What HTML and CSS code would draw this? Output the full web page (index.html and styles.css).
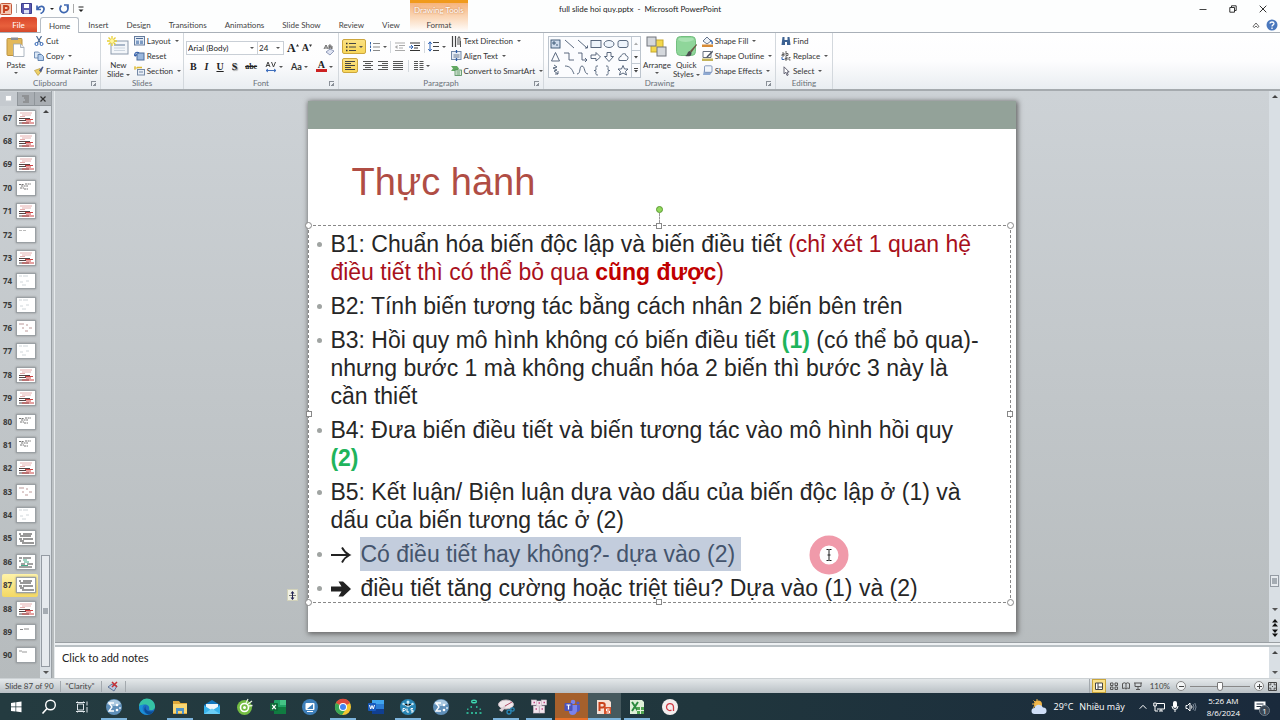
FILE: index.html
```html
<!DOCTYPE html>
<html lang="vi">
<head>
<meta charset="utf-8">
<title>full slide hoi quy.pptx - Microsoft PowerPoint</title>
<link rel="stylesheet" href="styles.css">
</head>
<body>
<svg class="defs" aria-hidden="true">
  <symbol id="spss" viewBox="0 0 18 18"><circle cx="9" cy="9" r="8" fill="#5f8fb8"/><path d="M2 6a8 8 0 0 1 14 0Q9 10 2 6z" fill="#a9c8e0"/><path d="M9 5H4l3 4-3 4h5" fill="none" stroke="#fff" stroke-width="1.3"/><circle cx="12" cy="7" r="1.3" fill="#fff"/><circle cx="12" cy="12" r="1.3" fill="#fff"/><circle cx="15" cy="10" r="1" fill="#dcebf6"/></symbol>
  <symbol id="t-red" viewBox="0 0 18 14"><path d="M3 2h12M5 4h9M3 5.500h5" stroke="#d99" stroke-width=".8"/><path d="M2 7.500h11M2 9.500h7M2 12h10" stroke="#544" stroke-width="1"/><path d="M8 8.500h8M9 10h5M5 12h12" stroke="#c44" stroke-width="1.200"/></symbol>
  <symbol id="t-text" viewBox="0 0 18 14"><path d="M2 3.500h5M8 3h6M4 5h7M3 7h4M7 8h4" stroke="#666" stroke-width=".9" stroke-dasharray="2 .6"/></symbol>
  <symbol id="t-faint" viewBox="0 0 18 14"><path d="M2 2h3M6 2h5M3 8h3M9 7h3M5 11h4" stroke="#c3cbd0" stroke-width=".8"/></symbol>
  <symbol id="t-map" viewBox="0 0 18 14"><path d="M2 3h5M5 7h2M9 4h2M12 7h3M8 10h3" stroke="#b99" stroke-width="1"/></symbol>
  <symbol id="t-dense" viewBox="0 0 18 14"><path d="M2 3h2M6 3h9M3 5h11M2 8h3M6 8h10M3 10h4M5 12h12" stroke="#333" stroke-width="1.100"/></symbol>
  <symbol id="t-green" viewBox="0 0 18 14"><path d="M2 3h3M6 3h8M2 6h2M4 9h4M10 9h6M2 12h13" stroke="#444" stroke-width="1"/><path d="M6 5h4M7 7h5M4 10.500h7" stroke="#4a8" stroke-width="1.100"/></symbol>
</svg>

<header class="titlebar">
  <div class="quick">
    <button class="ib" aria-label="PowerPoint"><svg width="12" height="12" viewBox="0 0 12 12"><rect x=".5" y=".5" width="11" height="11" rx="1" fill="#f4c8b4" stroke="#c4593a"/><path d="M4 10V3h2.500a2 2 0 0 1 0 4H4" fill="none" stroke="#c43e1c" stroke-width="1.800"/></svg></button>
    <i class="bar"></i>
    <button class="ib" aria-label="Save"><svg width="11" height="11" viewBox="0 0 11 11"><path d="M.5.5h10v10h-9l-1-1z" fill="#5a5bb0" stroke="#3b3d8c"/><path d="M3 1h5v4H3z" fill="#fff"/><path d="M3 7h5v3.500H3z" fill="#dfe3f5"/></svg></button>
    <button class="ib" aria-label="Undo"><svg width="10" height="10" viewBox="0 0 10 10"><path d="M1 1.500V5.500H5M1.500 5C4 1 8.500 2 8 5.500 7.800 7.500 6 9 4.500 9.500" fill="none" stroke="#3d66b0" stroke-width="1.700"/></svg></button>
    <i class="caret"></i>
    <button class="ib" aria-label="Repeat"><svg width="10" height="10" viewBox="0 0 10 10"><path d="M2.500 1.500a4 4 0 1 0 5.500.5M5 1h4v4" fill="none" stroke="#3d66b0" stroke-width="1.700"/></svg></button>
    <i class="bar"></i>
    <button class="ib" aria-label="Customize"><svg width="6" height="8" viewBox="0 0 6 8"><path d="M.5 2h5" stroke="#222"/><path d="M.5 4.500h5L3 7z" fill="#222"/></svg></button>
  </div>
  <h1 class="doc">full slide hoi quy.pptx &nbsp;-&nbsp; Microsoft PowerPoint</h1>
  <div class="win">
    <button aria-label="Minimize"><svg width="8" height="8" viewBox="0 0 8 8"><path d="M.5 4.500h7" stroke="#444"/></svg></button>
    <button aria-label="Restore"><svg width="8" height="8" viewBox="0 0 8 8"><path d="M.8 2.500h4.700v4.700H.8zM2.500 2.500V.8h4.700v4.700H5.500" fill="none" stroke="#333"/></svg></button>
    <button aria-label="Close"><svg width="8" height="8" viewBox="0 0 8 8"><path d="M.7.7l6.600 6.600M7.300.7L.7 7.300" stroke="#333"/></svg></button>
  </div>
</header>

<nav class="tabs">
  <button class="tab file">File</button>
  <button class="tab on">Home</button>
  <button class="tab">Insert</button>
  <button class="tab">Design</button>
  <button class="tab">Transitions</button>
  <button class="tab">Animations</button>
  <button class="tab">Slide Show</button>
  <button class="tab">Review</button>
  <button class="tab">View</button>
  <div class="context"><span>Drawing Tools</span><button class="tab fmt">Format</button></div>
  <div class="help">
    <button class="ib" aria-label="Minimize the Ribbon"><svg width="8" height="8" viewBox="0 0 8 8"><path d="M1 5.500L4 2l3 3.500L5.500 6.500 4 5 2.500 6.500z" fill="none" stroke="#444" stroke-width=".8"/></svg></button>
    <button class="ib" aria-label="Help"><svg width="12" height="12" viewBox="0 0 12 12"><circle cx="6" cy="6" r="5.500" fill="#4a78bd"/><path d="M4 4.500C4 2.500 8 2.500 8 4.500 8 6 6 5.800 6 7.500M6 8.500V10" fill="none" stroke="#fff" stroke-width="1.300"/></svg></button>
  </div>
</nav>

<section class="ribbon">
  <div class="group g-clip">
    <div class="body">
      <button class="big"><svg width="20" height="21" viewBox="0 0 20 21"><rect x="1" y="2.500" width="15" height="17" rx="1" fill="#e3b95b" stroke="#bd9340"/><path d="M5 4V1.500h7V4z" fill="#8a8f96"/><path d="M7.500 8h7l3.500 3.500v9H7.500z" fill="#fff" stroke="#9aa6b4" stroke-width=".8"/><path d="M14.500 8v3.500H18" fill="#e6ebf0" stroke="#9aa6b4" stroke-width=".8"/></svg><span>Paste</span><i class="caret"></i></button>
      <div class="stack">
        <button class="sm"><svg width="10" height="10" viewBox="0 0 10 10"><path d="M2.500 0L6.500 7M7.500 0L3.500 7" stroke="#4a6890" stroke-width="1.200"/><circle cx="2.500" cy="8" r="1.500" fill="none" stroke="#2c62b4"/><circle cx="7.500" cy="8" r="1.500" fill="none" stroke="#2c62b4"/></svg>Cut</button>
        <button class="sm"><svg width="10" height="10" viewBox="0 0 10 10"><path d="M.5 1h4l1.500 1.500V7H.5z" fill="#dce8f6" stroke="#5b7ba8" stroke-width=".8"/><path d="M4 3.500h3.500l2 2V9.500H4z" fill="#b8d0ee" stroke="#466d9f" stroke-width=".8"/></svg>Copy<i class="caret"></i></button>
        <button class="sm"><svg width="10" height="10" viewBox="0 0 10 10"><path d="M.5 4.500L6 2.500l1 3L4 9.500z" fill="#edd068" stroke="#b99a3a" stroke-width=".7"/><path d="M5 4.500l2 2L9.500 1 8.500.5z" fill="#49598a"/></svg>Format Painter</button>
      </div>
    </div>
    <div class="cap"><span>Clipboard</span><i class="dlg"></i></div>
  </div>
  <div class="group g-slides">
    <div class="body">
      <button class="big"><svg width="22" height="21" viewBox="0 0 22 21"><rect x="4" y="5" width="17" height="13" fill="#f3f6fa" stroke="#8b99ab"/><path d="M7 8h11v2H7z" fill="#a9b7c9"/><path d="M7 12h11M7 14.500h11" stroke="#ccd5df"/><path d="M5 0v10M0 5h10M1.500 1.500l7 7M8.500 1.500l-7 7" stroke="#e8cf32" stroke-width="1.300"/><circle cx="5" cy="5" r="2" fill="#fff6a0"/></svg><span>New</span><span>Slide<i class="caret"></i></span></button>
      <div class="stack">
        <button class="sm"><svg width="11" height="10" viewBox="0 0 11 10"><rect x=".5" y=".5" width="10" height="8.500" fill="#e4ecf6" stroke="#667d9e"/><path d="M2 2.500h7" stroke="#4c6a96"/><path d="M2 4.500h3V8H2zM6 4.500h3V8H6z" fill="#7f9cc4"/></svg>Layout<i class="caret"></i></button>
        <button class="sm"><svg width="11" height="11" viewBox="0 0 11 11"><rect x="3" y="3" width="7" height="7" fill="#9ab7dd" stroke="#4e6e9c"/><path d="M5 3A2.500 2.500 0 0 0 1 3.500V6M0 4.500L1.200 6 3 4.500" fill="none" stroke="#2d5aa8" stroke-width="1.100"/></svg>Reset</button>
        <button class="sm"><svg width="11" height="10" viewBox="0 0 11 10"><path d="M1 0v4M-.5 2h4" stroke="#dcb92f"/><path d="M3 1.500h5" stroke="#dcb92f" stroke-width="1.500"/><rect x="3.500" y="3.500" width="7" height="5.500" fill="#e8eef6" stroke="#7489a6"/><path d="M5 6h4" stroke="#7489a6"/></svg>Section<i class="caret"></i></button>
      </div>
    </div>
    <div class="cap"><span>Slides</span></div>
  </div>
  <div class="group g-font">
    <div class="body rows">
      <div class="line">
        <label class="pick face"><select aria-label="Font"><option>Arial (Body)</option></select><i class="caret"></i></label>
        <label class="pick size"><select aria-label="Font size"><option>24</option></select><i class="caret"></i></label>
        <button class="ch" aria-label="Grow font"><b class="serif l">A</b><svg width="3" height="7" viewBox="0 0 3 7"><path d="M0 2.500L1.500 0 3 2.500z" fill="#333"/></svg></button>
        <button class="ch" aria-label="Shrink font"><b class="serif">A</b><svg width="3" height="7" viewBox="0 0 3 7"><path d="M0 .5h3L1.500 3z" fill="#333"/></svg></button>
        <button class="ch right" aria-label="Clear formatting"><svg width="12" height="12" viewBox="0 0 12 12"><path d="M1 5l2-4 2 4M2 4h2M6 1v4h1.500a1 1 0 0 0 0-2H6h1.200a1 1 0 0 0 0-2zM9 2v3" fill="none" stroke="#555" stroke-width=".9"/><path d="M3 8l4-3 4 2-4 4z" fill="#dfe4f3" stroke="#7a86a8" stroke-width=".8"/></svg></button>
      </div>
      <div class="line fmtline">
        <button class="ch"><b class="serif">B</b></button>
        <button class="ch"><em class="serif">I</em></button>
        <button class="ch"><u class="serif">U</u></button>
        <button class="ch"><b class="serif shadow">S</b></button>
        <button class="ch"><s class="serif">abc</s></button>
        <button class="ch" aria-label="Character spacing"><svg width="12" height="12" viewBox="0 0 12 12"><path d="M1 6l2-5 2 5M2 4.500h2.500M6.500 1l2 5 2-5" fill="none" stroke="#444"/><path d="M1 9.500h10M3 8L1 9.500 3 11M9 8l2 1.500L9 11" fill="none" stroke="#3e6ebc"/></svg><i class="caret"></i></button>
        <button class="ch"><span class="case">Aa</span><i class="caret"></i></button>
        <button class="ch ul"><span class="serif fc">A</span><i class="caret"></i></button>
      </div>
    </div>
    <div class="cap"><span>Font</span><i class="dlg"></i></div>
  </div>
  <div class="group g-para">
    <div class="body">
      <div class="rows">
        <div class="line">
          <button class="ch hot" aria-label="Bullets"><svg width="12" height="10" viewBox="0 0 12 10"><path d="M4 1.500h7M4 5h7M4 8.500h7" stroke="#444"/><path d="M1 1.500h1.500M1 5h1.500M1 8.500h1.500" stroke="#333" stroke-width="1.500"/></svg><i class="caret"></i></button>
          <button class="ch" aria-label="Numbering"><svg width="12" height="10" viewBox="0 0 12 10"><path d="M4 1.500h7M4 5h7M4 8.500h7" stroke="#888"/><path d="M1.500 0v2.500M1.500 3.500V6M1.500 7v2.500" stroke="#3565a8"/></svg><i class="caret"></i></button>
          <i class="sep"></i>
          <button class="ch" aria-label="Decrease indent"><svg width="12" height="10" viewBox="0 0 12 10"><path d="M1 1h10M5 3.500h6M5 6h4M1 8.500h10" stroke="#aaa"/><path d="M3.500 3L.8 5l2.700 2z" fill="#aaa"/></svg></button>
          <button class="ch" aria-label="Increase indent"><svg width="12" height="10" viewBox="0 0 12 10"><path d="M1 1h10M5 3.500h6M5 6h4M1 8.500h10" stroke="#333"/><path d="M0 5h3M2 3l2 2-2 2" fill="none" stroke="#2c62b4"/></svg></button>
          <i class="sep"></i>
          <button class="ch" aria-label="Line spacing"><svg width="12" height="11" viewBox="0 0 12 11"><path d="M5 1.500h6M5 5.500h6M5 9.500h6" stroke="#444"/><path d="M2 1v9M.3 3L2 .8 3.700 3M.3 8L2 10.200 3.700 8" fill="none" stroke="#2c62b4"/></svg><i class="caret"></i></button>
        </div>
        <div class="line">
          <button class="ch hot one" aria-label="Align left"><svg width="10" height="9" viewBox="0 0 10 9"><path d="M0 .5h10M0 2.500h6M0 4.500h10M0 6.500h6M0 8.500h10" stroke="#444"/></svg></button>
          <button class="ch" aria-label="Center"><svg width="10" height="9" viewBox="0 0 10 9"><path d="M0 .5h10M2 2.500h6M0 4.500h10M2 6.500h6M0 8.500h10" stroke="#555"/></svg></button>
          <button class="ch" aria-label="Align right"><svg width="10" height="9" viewBox="0 0 10 9"><path d="M0 .5h10M4 2.500h6M0 4.500h10M4 6.500h6M0 8.500h10" stroke="#555"/></svg></button>
          <button class="ch" aria-label="Justify"><svg width="10" height="9" viewBox="0 0 10 9"><path d="M0 .5h10M0 2.500h10M0 4.500h10M0 6.500h10M0 8.500h10" stroke="#555"/></svg></button>
          <i class="sep"></i>
          <button class="ch" aria-label="Columns"><svg width="10" height="9" viewBox="0 0 10 9"><path d="M0 .5h4M0 2.500h4M0 4.500h4M0 6.500h4M0 8.500h4M5.500.5h4M5.500 2.500h4M5.500 4.500h4M5.500 6.500h4M5.500 8.500h4" stroke="#555"/></svg><i class="caret"></i></button>
        </div>
      </div>
      <div class="stack">
        <button class="sm"><svg width="11" height="11" viewBox="0 0 11 11"><path d="M1.500 0v11M4.500 0v11" stroke="#444" stroke-width="1.200"/><path d="M7 9V2l1-1.500L9 2v7M9.500 11V5" fill="none" stroke="#555"/></svg>Text Direction<i class="caret"></i></button>
        <button class="sm"><svg width="11" height="11" viewBox="0 0 11 11"><rect x=".5" y="1.500" width="9.500" height="8" fill="#e6edf7" stroke="#7389a8"/><path d="M2.500 5h6M2.500 7h6" stroke="#68798f"/><path d="M5.500 0v3M5.500 8v3" stroke="#2d5ca8" stroke-width="1.300"/></svg>Align Text<i class="caret"></i></button>
        <button class="sm"><svg width="11" height="11" viewBox="0 0 11 11"><path d="M0 1h6l2 2.500L6 6H0l2-2.500z" fill="#62a862"/><rect x="4" y="5" width="6.500" height="5.500" fill="#d9eadb" stroke="#4c8b56" stroke-width=".8"/><path d="M5.500 7h3.500M5.500 9h3.500" stroke="#4c8b56" stroke-width=".8"/></svg>Convert to SmartArt<i class="caret"></i></button>
      </div>
    </div>
    <div class="cap"><span>Paragraph</span><i class="dlg"></i></div>
  </div>
  <div class="group g-draw">
    <div class="body">
      <button class="shapes" aria-label="Shapes"><svg width="91" height="40" viewBox="0 0 91 40"><g fill="none" stroke="#4a5a72" stroke-width=".9"><rect x="2" y="3" width="9" height="8" fill="#cfdcec" stroke="#33506f"/><path d="M4 5h2v2H4zM7 8h2" stroke="#33506f"/><path d="M16 3l9 8M29 3l9 8M36 11h2.500V8.500"/><rect x="42" y="3.500" width="10" height="7" fill="#eef4fb"/><ellipse cx="60" cy="7" rx="5" ry="3.500" fill="#eef4fb"/><rect x="69" y="3.500" width="10" height="7" rx="2" fill="#eef4fb"/><path d="M2.500 24l4-8.500 4 8.500zM15 16h5v7h5M29 16h4v7h5M36 21l2 2-2 2M42 18h5v-2.500l4.500 4.500-4.500 4V21.500h-5zM58 15.500h4v4h2.500L60 24.500l-4.500-5H58zM70 23.500c-1-3 1-4 2-4 0-2 3-4 5-2-2 1 2 1 2 3s-1 3-2 3z"/><path d="M5 28l3 2-4 1 4 2-3 1 4 3M6 37h3v-3M16 29c5 0 7 3 9 8M28 37c4 0 2-8 5-8s2 8 6 8M49 29c-3 0-2 1-2 3s-1 1.500-2 1.500c1 0 2 0 2 1.500s-1 3 2 3M57 29c3 0 2 1 2 3s1 1.500 2 1.500c-1 0-2 0-2 1.500s1 3-2 3M74 28.500l1.500 3.500h3.500l-2.500 2.500 1 3.500-3.500-2-3.500 2 1-3.500-2.500-2.500h3.500z"/></g><path d="M82.500 0v40M82.500 13.500H91M82.500 26.500H91" stroke="#c2cad3"/><path d="M85 8h4l-2-2.500z" fill="#aaa"/><path d="M85 19h4l-2 2.500zM85 33h4l-2 2.500z" fill="#444"/><path d="M85 31.500h4" stroke="#444"/></svg></button>
      <button class="big arr"><svg width="21" height="21" viewBox="0 0 21 21"><rect x="5" y="4" width="12" height="12" fill="#f4d84c" stroke="#c7a829"/><rect x="1" y="1" width="9" height="9" fill="#d5d8dc" stroke="#70757c"/><rect x="11" y="11" width="9" height="9" fill="#d5d8dc" stroke="#70757c"/></svg><span>Arrange</span><i class="caret"></i></button>
      <button class="big qs"><svg width="21" height="21" viewBox="0 0 21 21"><rect x=".5" y=".5" width="19" height="19" rx="4" fill="#8fd69a" stroke="#74bf80"/><path d="M2 4q7 4 16 0l-1-2H3z" fill="#a9e2b2"/><path d="M20.500 8L14 15l1.500 1.500L21 9z" fill="#6c5a44"/><path d="M14 15c-3 0-2 4-5 5 4 1 7 0 6.500-3.500z" fill="#4c4d52"/></svg><span>Quick</span><span>Styles<i class="caret"></i></span></button>
      <div class="stack">
        <button class="sm"><svg width="11" height="11" viewBox="0 0 11 11"><path d="M1 5l4-4 4 4-4 3z" fill="#eef2f8" stroke="#56657f" stroke-width=".9"/><path d="M8 4q3 1 2 4" fill="none" stroke="#2d62b0" stroke-width="1.300"/><path d="M0 8.500h11V11H0z" fill="#d78b37"/></svg>Shape Fill<i class="caret"></i></button>
        <button class="sm"><svg width="11" height="11" viewBox="0 0 11 11"><path d="M1 1.500h8v6H1z" fill="#fff" stroke="#68717e"/><path d="M10.500.5L5 6l-1 2 2-1 5-5z" fill="#4d5563"/><path d="M0 8.500h11V11H0z" fill="#c4b45a"/></svg>Shape Outline<i class="caret"></i></button>
        <button class="sm"><svg width="11" height="11" viewBox="0 0 11 11"><path d="M2 5l2-3h6v5L8 10H1z" fill="#8ea9d2"/><rect x="2.500" y=".8" width="7.500" height="6.500" rx="1" fill="#f1f5fb" stroke="#6e87b0" stroke-width=".8"/></svg>Shape Effects<i class="caret"></i></button>
      </div>
    </div>
    <div class="cap"><span>Drawing</span><i class="dlg"></i></div>
  </div>
  <div class="group g-edit">
    <div class="body">
      <div class="stack">
        <button class="sm"><svg width="10" height="10" viewBox="0 0 10 10"><path d="M1.500 1h2v3h3V1h2l1 8H6V6H4v3H.5z" fill="#3d6292"/></svg>Find</button>
        <button class="sm"><svg width="10" height="10" viewBox="0 0 10 10"><path d="M1 2h2v3H1V3.500h2M5 0v4.500h2V2.500H5M4 6h2v3H4V7.500h2M9.500 6.500H8V9h1.500" fill="none" stroke="#555" stroke-width=".9"/><path d="M1 6v2.500h2" fill="none" stroke="#2d62b0"/></svg>Replace<i class="caret"></i></button>
        <button class="sm"><svg width="10" height="10" viewBox="0 0 10 10"><path d="M3 .8v7l1.800-1.500L6 9.500l1.200-.5L6 6h2.200z" fill="#fff" stroke="#556" stroke-width=".9"/></svg>Select<i class="caret"></i></button>
      </div>
    </div>
    <div class="cap"><span>Editing</span></div>
  </div>
</section>

<main class="work">
  <aside class="side">
    <div class="sidetabs">
      <button class="on" aria-label="Slides"><svg width="8" height="7" viewBox="0 0 8 7"><rect x=".5" y=".5" width="6" height="5.500" fill="#fff" stroke="#c9ced3"/></svg></button>
      <button aria-label="Outline"><svg width="8" height="8" viewBox="0 0 8 8"><path d="M0 1h7M2 3h5M3 5h4M1 7h6" stroke="#777"/></svg></button>
      <button aria-label="Close pane"><svg width="6" height="6" viewBox="0 0 6 6"><path d="M.5.5l5 5M5.500.5l-5 5" stroke="#333" stroke-width="1.200"/></svg></button>
    </div>
    <div class="sidebody">
      <ol class="thumbs">
        <li>67<svg><use href="#t-red"/></svg></li>
        <li>68<svg><use href="#t-red"/></svg></li>
        <li>69<svg><use href="#t-red"/></svg></li>
        <li>70<svg><use href="#t-text"/></svg></li>
        <li>71<svg><use href="#t-red"/></svg></li>
        <li>72<svg><path d="M2 2.500h3M6 2.500h3" stroke="#bbb"/></svg></li>
        <li>73<svg><use href="#t-red"/></svg></li>
        <li>74<svg><use href="#t-faint"/></svg></li>
        <li>75<svg><use href="#t-faint"/></svg></li>
        <li>76<svg><use href="#t-map"/></svg></li>
        <li>77<svg><use href="#t-faint"/></svg></li>
        <li>78<svg><use href="#t-red"/></svg></li>
        <li>79<svg><use href="#t-red"/></svg></li>
        <li>80<svg><use href="#t-text"/></svg></li>
        <li>81<svg><use href="#t-text"/></svg></li>
        <li>82<svg><use href="#t-red"/></svg></li>
        <li>83<svg><use href="#t-map"/></svg></li>
        <li>84<svg><use href="#t-faint"/></svg></li>
        <li>85<svg><use href="#t-dense"/></svg></li>
        <li>86<svg><use href="#t-green"/></svg></li>
        <li class="cur">87<svg><use href="#t-dense"/></svg></li>
        <li>88<svg><use href="#t-red"/></svg></li>
        <li>89<svg><path d="M3 4.500h3M7 4h5" stroke="#888"/></svg></li>
        <li>90<svg><path d="M2 3h3M5 4h5" stroke="#999"/></svg></li>
      </ol>
      <div class="scroll left"><i class="up"></i><div class="track"><div class="grip"></div></div><i class="down"></i></div>
    </div>
  </aside>

  <div class="stage">
    <div class="upper">
      <div class="canvas">
        <article class="slide">
          <div class="band"></div>
          <h2>Thực hành</h2>
          <div class="box">
            <ul>
              <li>B1: Chuẩn hóa biến độc lập và biến điều tiết <span class="red">(chỉ xét 1 quan hệ<br>điều tiết thì có thể bỏ qua <b>cũng được</b>)</span></li>
              <li>B2: Tính biến tương tác bằng cách nhân 2 biến bên trên</li>
              <li>B3: Hồi quy mô hình không có biến điều tiết <b class="green">(1)</b> (có thể bỏ qua)-<br>nhưng bước 1 mà không chuẩn hóa 2 biến thì bước 3 này là<br>cần thiết</li>
              <li>B4: Đưa biến điều tiết và biến tương tác vào mô hình hồi quy<br><b class="green">(2)</b></li>
              <li>B5: Kết luận/ Biện luận dựa vào dấu của biến độc lập ở (1) và<br>dấu của biến tương tác ở (2)</li>
              <li><svg class="arrow" width="22" height="20" viewBox="0 0 22 20"><path d="M1 10h18M12 2.500q2.500 5 7.500 7.500-5 2.500-7.500 7.500" fill="none" stroke="#222" stroke-width="1.800"/></svg><mark>Có điều tiết hay không?- dựa vào (2)</mark></li>
              <li><svg class="arrow" width="22" height="20" viewBox="0 0 22 20"><path d="M1 7.500h10.500L8.500 2.500H13L21 10l-8 7.500H8.500l3-5H1z" fill="#222"/></svg>điều tiết tăng cường hoặc triệt tiêu? Dựa vào (1) và (2)</li>
            </ul>
            <i class="h c nw"></i><i class="h n"></i><i class="h c ne"></i><i class="h w"></i><i class="h e"></i><i class="h c sw"></i><i class="h s"></i><i class="h c se"></i>
            <i class="stem"></i><i class="rot"></i>
            <svg class="cursor" width="40" height="40" viewBox="0 0 40 40"><circle cx="20" cy="20" r="14.500" fill="#fff" stroke="#f09aaa" stroke-width="10"/><path d="M17.500 14.500h2l.5.5.5-.5h2M20 15v10M17.500 25.500h2l.5-.5.5.5h2M18.500 20h3" fill="none" stroke="#222"/></svg>
            <button class="fit" aria-label="AutoFit options"><svg width="7" height="9" viewBox="0 0 7 9"><path d="M0 4.500h7" stroke="#777"/><path d="M3.500 0L5.500 2.500h-4zM3.500 9l2-2.500h-4z" fill="#222255"/><path d="M3.500 2v5" stroke="#222255"/></svg></button>
          </div>
        </article>
      </div>
      <div class="scroll right"><i class="up"></i><div class="track"><div class="grip"></div></div><i class="down"></i><svg width="8" height="20" viewBox="0 0 8 20"><path d="M4 1l3 3.500H1zM4 5l3 3.500H1zM4 15l3-3.500H1zM4 19l3-3.500H1z" fill="#111"/></svg></div>
    </div>
    <div class="notes">
      <textarea aria-label="Notes">Click to add notes</textarea>
      <div class="scroll mini"><i class="up"></i><i class="down"></i></div>
    </div>
  </div>
</main>

<footer class="status">
  <span class="cell">Slide 87 of 90</span><span class="cell">"Clarity"</span>
  <span class="cell"><svg width="12" height="11" viewBox="0 0 12 11"><path d="M1 6l4-3 5 2-3 5z" fill="#b9c7de" stroke="#566b90" stroke-width=".9"/><path d="M5 1l5 5M10 1L5 6" stroke="#c62f35" stroke-width="1.500"/></svg></span>
  <div class="views">
    <button class="on" aria-label="Normal"><svg width="8" height="8" viewBox="0 0 8 8"><path d="M.5 1h7v6.500h-7zM3 1v6.500M3 5h4.500" fill="#fff" stroke="#444"/></svg></button>
    <button aria-label="Slide sorter"><svg width="8" height="8" viewBox="0 0 8 8"><path d="M.5 1h2.500v2.500H.5zM5 1h2.500v2.500H5zM.5 5h2.500v2.500H.5zM5 5h2.500v2.500H5z" fill="none" stroke="#555"/></svg></button>
    <button aria-label="Reading view"><svg width="8" height="8" viewBox="0 0 8 8"><path d="M.5 1.500Q2.500 0 4 1.500 5.500 0 7.500 1.500v5Q5.500 5.500 4 7 2.500 5.500.5 6.500zM4 1.500V7" fill="none" stroke="#555"/></svg></button>
    <button aria-label="Slide show"><svg width="8" height="8" viewBox="0 0 8 8"><path d="M0 1h8M1 1v3.500h6V1M4 4.500V7M2 7.500h4" fill="none" stroke="#555"/></svg></button>
    <span class="pct">110%</span>
    <button class="round" aria-label="Zoom out"><svg width="5" height="5" viewBox="0 0 5 5"><path d="M0 2.500h5" stroke="#444"/></svg></button>
    <input type="range" min="0" max="100" value="50" aria-label="Zoom">
    <button class="round" aria-label="Zoom in"><svg width="5" height="5" viewBox="0 0 5 5"><path d="M0 2.500h5M2.500 0v5" stroke="#444"/></svg></button>
    <button class="fitwin" aria-label="Fit to window"><svg width="9" height="9" viewBox="0 0 9 9"><path d="M.5.5h8v8h-8zM2 3.500V2h1.500M5.500 2H7v1.500M7 5.500V7H5.500M3.500 7H2V5.500M4 4.500h1" fill="none" stroke="#444"/></svg></button>
  </div>
</footer>

<div class="taskbar">
  <div class="apps">
    <button aria-label="Start"><svg width="18" height="18" viewBox="0 0 18 18"><path d="M4 5l4.500-.7v4.200H4zM9.200 4.200L14.500 3.500v5H9.200zM4 9.300h4.500v4.200L4 12.900zM9.200 9.300h5.300v5l-5.300-.7z" fill="#fff"/></svg></button>
    <button aria-label="Search"><svg width="18" height="18" viewBox="0 0 18 18"><circle cx="10.500" cy="7" r="4.800" fill="none" stroke="#fff" stroke-width="1.400"/><path d="M7 10.500L2.500 15.500" stroke="#fff" stroke-width="1.600"/></svg></button>
    <button aria-label="Task view"><svg width="18" height="18" viewBox="0 0 18 18"><path d="M4.500 6h6v6h-6zM4.500 3.500V5M10.500 3.500V5M4.500 14.500V13M10.500 14.500V13M3 4.500h9M3 13.500h9M14 3.500v4M14 9v5.500" fill="none" stroke="#dfe6ea"/></svg></button>
    <button class="run" aria-label="SPSS"><svg width="18" height="18"><use href="#spss"/></svg></button>
    <button aria-label="Edge"><svg width="18" height="18" viewBox="0 0 18 18"><circle cx="9" cy="9" r="8" fill="#1c6fc4"/><path d="M1 9A8 8 0 0 1 17 8c.5 4-4 5-6 3.500C12 9 10 6.500 7 6.500 4 6.500 2 7.500 1 9z" fill="#35c2a4"/><path d="M6 7c-3 3-1 9 5 9.500-6 1.500-10-3-10-7.500C2 7.500 4 6.500 6 7z" fill="#1a91d6"/><path d="M8 8c-1.500 2 0 5.500 5 5.500l3-.5c-1 1.500-3 3-5 3.500C6 16 5 10 8 8z" fill="#0b4d96"/></svg></button>
    <button class="run" aria-label="File Explorer"><svg width="18" height="18" viewBox="0 0 18 18"><path d="M2 3h6l1.500 2H16v11H2z" fill="#e0a83a"/><path d="M2 6h14v9H2z" fill="#f8d673"/><path d="M5 10h8v6h-2v-3H7v3H5z" fill="#4f93c9"/></svg></button>
    <button aria-label="Mail"><svg width="18" height="18" viewBox="0 0 18 18"><path d="M1 7l8-5 8 5v9H1z" fill="#1378c0"/><path d="M3 6h12v6H3z" fill="#eef6fb"/><path d="M1 7.500l8 5 8-5V16H1z" fill="#38b3ec"/><path d="M1 16l8-5.500L17 16z" fill="#6acdf6"/></svg></button>
    <button aria-label="Cốc Cốc"><svg width="18" height="18" viewBox="0 0 18 18"><circle cx="8.500" cy="9.500" r="7.500" fill="#74bd43"/><circle cx="8.500" cy="9.500" r="4" fill="none" stroke="#fff" stroke-width="1.600"/><circle cx="8.500" cy="9.500" r="1.500" fill="#fff"/><path d="M10 5l2-4M12 6l4-3M12.500 8l4-.5" stroke="#e9f5df" stroke-width="1.300"/></svg></button>
    <button aria-label="Excel"><svg width="18" height="18" viewBox="0 0 18 18"><rect x="5" y="2" width="12" height="14" rx="1" fill="#21a366"/><path d="M11 2h6v5h-6z" fill="#45c486"/><path d="M5 9h12v7H5z" fill="#107c41"/><rect x="1" y="5" width="8" height="8" rx="1" fill="#0e6a38"/><path d="M3.200 6.800l3.600 4.400M6.800 6.800l-3.600 4.400" stroke="#fff" stroke-width="1.200"/></svg></button>
    <button aria-label="Remote"><svg width="18" height="18" viewBox="0 0 18 18"><circle cx="9" cy="9" r="8" fill="#3f80ba"/><rect x="4.500" y="5" width="9" height="7" rx="1" fill="#fff"/><path d="M6 11l6-5v5z" fill="#3f80ba"/><path d="M6 13.500h6" stroke="#fff"/></svg></button>
    <button class="run" aria-label="Chrome"><svg width="18" height="18" viewBox="0 0 18 18"><circle cx="9" cy="9" r="8" fill="#f4c630"/><path d="M9 9L2 5A8 8 0 0 1 16 5z" fill="#dd4b3e"/><path d="M9 9L2 5a8 8 0 0 0 6 12l4-6z" fill="#3aa757"/><circle cx="9" cy="9" r="4" fill="#fff"/><circle cx="9" cy="9" r="3" fill="#4285f4"/></svg></button>
    <button aria-label="Word"><svg width="18" height="18" viewBox="0 0 18 18"><rect x="5" y="2" width="12" height="14" rx="1" fill="#2b7cd3"/><path d="M5 2h12v4H5z" fill="#41a5ee"/><path d="M5 11h12v5H5z" fill="#103f91"/><rect x="1" y="5" width="8" height="8" rx="1" fill="#185abd"/><path d="M2.500 7l1.200 4L5 7.500 6.300 11l1.200-4" fill="none" stroke="#fff"/></svg></button>
    <button class="run" aria-label="SmartPLS"><svg width="18" height="18" viewBox="0 0 18 18"><circle cx="9" cy="9" r="8" fill="#2a86b4"/><circle cx="9" cy="4" r="1.500" fill="#cdeefa"/><circle cx="4.500" cy="6" r="1.200" fill="#cdeefa"/><circle cx="13.500" cy="6" r="1.200" fill="#cdeefa"/><path d="M9 4v5M4.500 6L9 9l4.500-3" stroke="#cdeefa"/><path d="M4 14v-3.500h1.500a1 1 0 0 1 0 2H4M8 10.500V14h2M14 10.500h-2v1.700h2V14h-2" fill="none" stroke="#fff"/></svg></button>
    <button aria-label="SPSS"><svg width="18" height="18"><use href="#spss"/></svg></button>
    <button aria-label="Amos"><svg width="18" height="18" viewBox="0 0 18 18"><ellipse cx="9" cy="3.500" rx="3" ry="2" fill="#3fd6b0"/><path d="M7.500 3.500h3" stroke="#1b4a48"/><g fill="#2fae90"><rect x="5.500" y="8" width="1.500" height="2"/><rect x="11" y="8" width="1.500" height="2"/><rect x="2" y="10.500" width="1.500" height="1.500"/><rect x="14.500" y="10.500" width="1.500" height="1.500"/><rect x="1.500" y="14" width="2" height="2"/><rect x="6" y="14" width="2" height="2"/><rect x="10" y="14" width="2" height="2"/><rect x="14.500" y="14" width="2" height="2"/></g></svg></button>
    <button class="run" aria-label="Snipping Tool"><svg width="18" height="18" viewBox="0 0 18 18"><ellipse cx="9" cy="6.500" rx="7.500" ry="4.500" fill="#f0e9ec" stroke="#c9bcc3"/><path d="M9 6.500L2 12l3 2 5-7" fill="#dccfd5"/><path d="M8 8l7-4" stroke="#b14f6a"/><circle cx="12" cy="14" r="2" fill="none" stroke="#2b88b7" stroke-width="1.300"/><circle cx="15.500" cy="11.500" r="1.700" fill="none" stroke="#2b88b7" stroke-width="1.300"/></svg></button>
    <button class="run" aria-label="Modeler"><svg width="18" height="18" viewBox="0 0 18 18"><g fill="#f1e6ee" stroke="#d4c0ce" stroke-width=".6"><rect x="1.500" y="2" width="5" height="5"/><rect x="6.500" y="3" width="5" height="5"/><rect x="11.500" y="2" width="5" height="5"/><rect x="3.500" y="8" width="5.500" height="7"/><rect x="9.500" y="8" width="5" height="7"/></g><path d="M3.500 4.500h1.500M8.500 5h1.500M13.500 4.500H15M5.500 11h1.500M11.500 11H13" stroke="#c44b86" stroke-width="1.600"/></svg></button>
    <button class="teams" aria-label="Teams"><svg width="18" height="18" viewBox="0 0 18 18"><circle cx="10" cy="4" r="2.300" fill="#7b83eb"/><circle cx="15" cy="5" r="1.600" fill="#5059c9"/><path d="M13 7h4v5q-1 2.500-4 2z" fill="#5059c9"/><path d="M6 7h8v6q-1 4-4.500 4T6 13z" fill="#7b83eb"/><rect x="1.500" y="5" width="8" height="8" rx="1" fill="#4b53bc"/><path d="M3.500 7h4M5.500 7v4.500" stroke="#fff" stroke-width="1.200"/></svg></button>
    <button class="run here" aria-label="PowerPoint"><svg width="18" height="18" viewBox="0 0 18 18"><path d="M2 2h12l2 2v12H2z" fill="#f7e1d5"/><path d="M4.500 13V5h3a2.200 2.200 0 0 1 0 4.500h-3" fill="none" stroke="#c9431d" stroke-width="2"/><rect x="9" y="9" width="7" height="7" fill="#d8542d"/><path d="M14.500 11h-3v2h3v2h-3" fill="none" stroke="#fff"/></svg></button>
    <button class="run" aria-label="Excel 2010"><svg width="18" height="18" viewBox="0 0 18 18"><path d="M2 2h12l2 2v12H2z" fill="#dff0d8"/><path d="M4 4l6 9M10 4l-6 9" stroke="#2a8a3c" stroke-width="2"/><rect x="9" y="9" width="7" height="7" fill="#52a552"/><path d="M9 12.500h7M12.500 9v7" stroke="#e4f3df"/></svg></button>
    <button aria-label="Recorder"><svg width="18" height="18" viewBox="0 0 18 18"><circle cx="9" cy="9" r="8" fill="#f3eeee"/><path d="M12.500 13V9a3.500 3.500 0 1 0-2 3.200" fill="none" stroke="#d03a44" stroke-width="1.300"/></svg></button>
  </div>
  <div class="tray">
    <svg width="18" height="18" viewBox="0 0 18 18"><circle cx="8" cy="6.500" r="4" fill="#f0b64a"/><path d="M7 1v2M2 6h2M3.500 2.500L5 4M3 9.500l1.500-1" stroke="#f0b64a"/><path d="M4.500 16a3 3 0 0 1 0-6 4.500 4.500 0 0 1 8.500-.5A3.300 3.300 0 0 1 14 16z" fill="#cfdff7"/></svg>
    <span class="temp">29°C</span><span class="cond">Nhiều mây</span>
    <svg width="8" height="8" viewBox="0 0 8 8"><path d="M.7 5.700L4 2.300l3.300 3.400" fill="none" stroke="#fff"/></svg>
    <svg width="12" height="10" viewBox="0 0 12 10"><path d="M4 1.500h7.500V7H4M6 9h4M8 7v2M.8 1h2.500v3H.8zM2 4v5h3" fill="none" stroke="#fff"/></svg>
    <svg width="8" height="11" viewBox="0 0 8 11"><rect x="2" y="0" width="4" height="7" rx="2" fill="#fff"/><path d="M1 5q0 3.500 3 3.500T7 5M4 8.500V11" fill="none" stroke="#fff"/></svg>
    <svg width="12" height="10" viewBox="0 0 12 10"><path d="M1 3.500h1.500L5 1v8L2.500 6.500H1zM6.500 3.500q1 1.500 0 3" fill="none" stroke="#fff"/><path d="M8 2q2 3 0 6M9.800 1q2.500 4 0 8" fill="none" stroke="#7d8a99"/></svg>
    <time>5:26 AM<br>8/6/2024</time>
    <button class="note" aria-label="Notifications"><svg width="12" height="12" viewBox="0 0 12 12"><path d="M.5.500h11v8H7L5 11V8.500H.5z" fill="#fff"/><path d="M2.500 3h7M2.500 5.500h7" stroke="#1d2b3c"/></svg><span>1</span></button>
  </div>
</div>
</body>
</html>
```
FILE: styles.css
```css
* { box-sizing: border-box; }
html, body { margin: 0; }
body {
  display: flex; flex-direction: column; min-height: 100vh;
  background: #fdfefe; color: #333;
  font: 8px/10px Lato, "Open Sans", sans-serif;
}
button { font: inherit; color: inherit; border: 0; padding: 0; margin: 0; background: none; }
svg { display: block; flex: none; }
.defs { position: absolute; width: 0; height: 0; }
.ib { display: flex; align-items: center; }
.caret { display: inline-block; flex: none; border: 2px solid transparent; border-top-color: #555; border-bottom: 0; margin-left: 4px; vertical-align: middle; }

.titlebar { display: grid; grid-template-columns: 1fr auto 1fr; height: 17px; align-items: center; }
.quick { display: flex; align-items: center; gap: 4px; height: 15px; }
.quick .caret { margin: 0 1px 0 0; border-top-color: #222; }
.bar { width: 1px; height: 9px; background: #aaa; }
.doc { margin: 0; font-size: 8px; font-weight: 400; color: #222; }
.win { display: flex; justify-content: flex-end; gap: 22px; padding-right: 13px; }

.tabs { display: flex; height: 16px; border-bottom: 1px solid #a9b0b8; }
.tab { padding: 0 9px; height: 15px; color: #444; }
.file { width: 37px; margin-right: 3px; color: #fff; background: linear-gradient(#d9472b, #e8603c 60%, #d4482a); border-radius: 2px 2px 0 0; }
.tab.on { height: 16px; padding: 0 8px; border: 1px solid #b7bec6; border-bottom: 0; border-radius: 3px 3px 0 0; background: #fff; }
.context { display: flex; flex-direction: column; width: 58px; height: 32px; margin: -17px 0 0 1px; text-align: center; border-top: 3px solid #f09a1c; background: linear-gradient(#f6b47c, #fbdcc0 55%, #fff); color: #fff; }
.context span { height: 14px; line-height: 14px; text-shadow: 0 0 2px #b86a30; }
.help { display: flex; align-items: center; gap: 6px; margin-left: auto; padding-right: 2px; }

.ribbon { display: flex; height: 58px; background: linear-gradient(#fff, #fdfdfe 50%, #e9edf1); border-bottom: 2px solid #a5aaae; }
.group { display: flex; flex-direction: column; border-right: 1px solid #d3d8dd; padding-top: 1px; }
.g-clip { width: 101px; } .g-slides { width: 83px; } .g-font { width: 155px; }
.g-para { width: 205px; } .g-draw { width: 232px; } .g-edit { width: 57px; }
.body { display: flex; flex: 1; padding: 0 6px; min-height: 0; white-space: nowrap; }
.cap { display: flex; justify-content: center; height: 11px; color: #6a7078; position: relative; }
.dlg { position: absolute; right: 4px; top: 3px; width: 5px; height: 5px; border: 1px solid #8a9098; border-right: 0; border-bottom: 0; background: linear-gradient(135deg, transparent 60%, #8a9098 60%); }
.big { display: flex; flex-direction: column; align-items: center; padding-top: 2px; line-height: 9px; }
.big svg { margin-bottom: 4px; }
.big > .caret { margin: 2px 0 0; }
.big span .caret { margin-left: 2px; }
.stack { display: grid; grid-template-rows: repeat(3, 1fr); flex: 1; }
.g-clip .stack { padding-left: 8px; }
.g-slides .stack { padding-left: 4px; }
.sm { display: flex; align-items: center; text-align: left; gap: 2px; white-space: nowrap; }
.sm .caret { margin-left: 2px; }

.rows { display: flex; flex-direction: column; }
.line { display: flex; align-items: center; height: 15px; }
.ch { display: flex; align-items: center; }
.pick { position: relative; display: block; height: 14px; border: 1px solid #c9cfd6; background: #fff; }
.pick select { appearance: none; width: 100%; height: 12px; padding: 0 1px; border: 0; background: none; font: inherit; color: #222; }
.pick .caret { position: absolute; right: 3px; top: 5px; }
.face { width: 72px; } .size { width: 27px; margin-left: -1px; }
.g-font .rows { padding: 6px 0 0 2px; gap: 4px; }
.g-font .line .ch { margin-left: 3px; }
.g-font .line .right { margin-left: auto; margin-right: 3px; }
.g-font .fmtline { justify-content: space-between; padding: 0 5px 0 1px; }
.g-font .caret { margin-left: 2px; }
.case { font-size: 9px; font-weight: 700; }
.serif { font-family: "Liberation Serif", serif; font-size: 10px; line-height: 10px; font-weight: 700; color: #222; }
.serif.l { font-size: 12px; }
s.serif { font-size: 8px; }
.shadow { text-shadow: 1px 1px 1px #888; }
.fc { border-bottom: 3px solid #c22; padding: 0 2px; line-height: 8px; }
.g-para .body { padding: 0 0 0 1px; }
.g-para .rows { width: 111px; padding: 5px 0 0 2px; gap: 4px; }
.g-para .line { gap: 3px; }
.g-para .line .caret { margin-left: 2px; }
.hot { height: 15px; padding: 0 2px; background: linear-gradient(#fbe183, #f8d75b); border: 1px solid #cda73d; border-radius: 2px; }
.g-para .line:last-child { gap: 5px; }
.sep { width: 1px; height: 12px; background: #d3d8dd; }
.shapes { align-self: flex-start; margin-top: 2px; border: 1px solid #bcc4cd; background: #fbfcfe; }
.g-draw .body { padding: 0 0 0 4px; gap: 2px; }
.g-edit .body { padding-left: 5px; }

.work { display: flex; flex: 1; background: linear-gradient(#cdd2d6, #b6bbbd); }
.side { display: flex; flex-direction: column; width: 52px; border-right: 1px solid #9aa0a5; }
.sidetabs { display: flex; height: 15px; padding-top: 1px; }
.sidetabs button { flex: 1; display: flex; align-items: center; justify-content: center; background: #a9aeb3; border: 1px solid #8f959a; border-width: 0 0 1px 1px; }
.sidetabs .on { background: #c5cacf; border-color: transparent; }
.sidebody { display: flex; flex: 1; }
.thumbs { display: grid; grid-auto-rows: 1fr; flex: 1; margin: 0; padding: 0 2px 11px; list-style: none; }
.thumbs li { display: flex; align-items: center; justify-content: space-between; padding: 0 2px 0 1px; font: 700 8px/10px "Open Sans", sans-serif; color: #3a3a3a; }
.thumbs svg { width: 20px; height: 16px; background: #fff; border: 1px solid #9aa0a4; box-shadow: 0 0 2px #888; }
.thumbs .cur { background: linear-gradient(#fff3a8, #f3d863); border-radius: 2px; }

.scroll { display: flex; flex-direction: column; align-items: center; width: 11px; background: #d9dfe4; padding: 4px 0; }
.up, .down { border: 3px solid transparent; flex: none; }
.up { border-bottom-color: #444; border-top: 0; }
.down { border-top-color: #555; border-bottom: 0; }
.track { flex: 1; width: 100%; display: flex; flex-direction: column; }
.grip { width: 9px; margin: auto 1px 0; border: 1px solid #949ba3; background: #e6eaee; display: flex; align-items: center; justify-content: center; }
.grip::after { content: ""; width: 5px; height: 6px; background: #a5acb3; }
.left .grip { height: 20%; margin-bottom: 4px; }
.right .grip { height: 12px; margin-bottom: 23px; }
.right { gap: 2px; }
.right .down { margin-top: -4px; }
.right svg { margin-top: 5px; }
.mini { justify-content: space-between; }

.stage { display: flex; flex-direction: column; flex: 1; margin-left: 2px; min-width: 0; border-left: 1px solid #e6eaec; }
.upper { display: flex; flex: 1; }
.canvas { display: flex; flex: 1; align-items: center; justify-content: center; }
.slide { width: 58.25%; aspect-ratio: 4 / 3; background: #fff; box-shadow: 1px 1px 5px 1px #666; color: #262626; font-family: "Liberation Sans", Arial, sans-serif; }
.band { height: 28px; background: #93a299; }
.slide h2 { margin: 0; height: 96px; padding: 28px 0 0 43px; font-size: 38px; line-height: 50px; font-weight: 400; color: #b04d44; }
.box { position: relative; margin-right: 5px; border: 1px dashed #888; padding: 4px 0 0 21px; }
.box ul { margin: 0; padding: 0; list-style: none; display: grid; gap: 6px; font-size: 23px; line-height: 28px; white-space: nowrap; }
.box li { position: relative; }
.box li::before { content: ""; position: absolute; left: -13px; top: 12px; width: 5px; height: 5px; border-radius: 50%; background: #a0a4a2; }
.red { color: #a8101c; } .red b { color: #c00000; }
.green { color: #1fb45c; }
.arrow { display: inline-block; margin-right: 8px; vertical-align: -3px; }
mark { background: #c3cddd; color: #44546c; padding: 4px 6px 4px 0; }
.h { position: absolute; width: 6px; height: 6px; background: #fff; border: 1px solid #888; }
.h.c { border-radius: 50%; width: 7px; height: 7px; }
.nw { left: -4px; top: -4px; } .ne { right: -4px; top: -4px; }
.sw { left: -4px; bottom: -4px; } .se { right: -4px; bottom: -4px; }
.n { left: 50%; top: -3px; margin-left: -3px; } .s { left: 50%; bottom: -3px; margin-left: -3px; }
.w { left: -3px; top: 50%; margin-top: -3px; } .e { right: -3px; top: 50%; margin-top: -3px; }
.stem { position: absolute; left: 50%; top: -13px; height: 10px; border-left: 1px dashed #999; }
.rot { position: absolute; left: 50%; top: -20px; width: 7px; height: 7px; margin-left: -3px; border-radius: 50%; background: #92d95c; border: 1px solid #5c9a34; }
.cursor { position: absolute; left: 500px; bottom: 27px; }
.fit { position: absolute; left: -22px; bottom: 1px; width: 11px; height: 12px; display: flex; align-items: center; justify-content: center; background: #f1f1e4; border: 1px solid #d2d2ba; }

.notes { display: flex; height: 36px; border-top: 1px solid #9a9fa3; box-shadow: inset 0 2px #edf0f2, inset 0 4px #b9c0c4; padding-top: 4px; }
.notes textarea { flex: 1; resize: none; border: 0; outline: 0; margin: 0; padding: 4px 7px; background: #fff; color: #222; font: 11px/14px Lato, "Open Sans", sans-serif; }

.status { display: flex; height: 15px; align-items: center; background: linear-gradient(#e4e8ea, #b9c0c5); border-top: 1px solid #ccd1d4; color: #444; }
.cell { display: flex; align-items: center; height: 11px; padding: 0 6px 0 5px; border-right: 1px solid #a3a9ae; }
.views { display: flex; align-items: center; gap: 4px; margin-left: auto; padding: 0 3px 0 2px; border-left: 1px solid #a3a9ae; }
.views .on { padding: 2px; background: #f9e08a; border: 1px solid #c9a53c; }
.pct { margin: 0 2px 0 4px; }
.round { width: 10px; height: 10px; display: flex; align-items: center; justify-content: center; border: 1px solid #888; border-radius: 50%; background: #f3f5f6; }
.views input { appearance: none; width: 60px; height: 12px; margin: 0; background: linear-gradient(#888, #888) center / 100% 1px no-repeat; }
.views input::-webkit-slider-thumb { appearance: none; width: 6px; height: 9px; background: #fff; border: 1px solid #777; border-radius: 1px 1px 3px 3px; }

.taskbar { display: flex; justify-content: space-between; height: 27px; background: linear-gradient(90deg, #243b40, #20363d 55%, #1a2a3c); color: #fff; font-family: "Open Sans", sans-serif; }
.apps { display: grid; grid-template-columns: repeat(21, 1fr); width: 53.6%; }
.apps button { display: flex; align-items: center; justify-content: center; }
.run { background: linear-gradient(#7db4dc, #7db4dc) bottom / 26px 2px no-repeat; }
.apps .here { background-color: #46595e; background-size: 100% 2px; }
.teams { background: linear-gradient(#e8702a, #e8702a) bottom / 100% 2px no-repeat #a5602c; }
.tray { display: flex; align-items: center; font-size: 9px; padding-right: 14px; gap: 6px; }
.cond { margin-right: 8px; }
.tray time { font-size: 8px; line-height: 12px; text-align: center; margin: 0 8px 0 4px; }
.note { position: relative; }
.note span { position: absolute; left: 5px; top: 4px; width: 11px; height: 11px; border-radius: 50%; background: #3a4653; border: 1px solid #6f7b87; line-height: 9px; font-size: 8px; }
```
